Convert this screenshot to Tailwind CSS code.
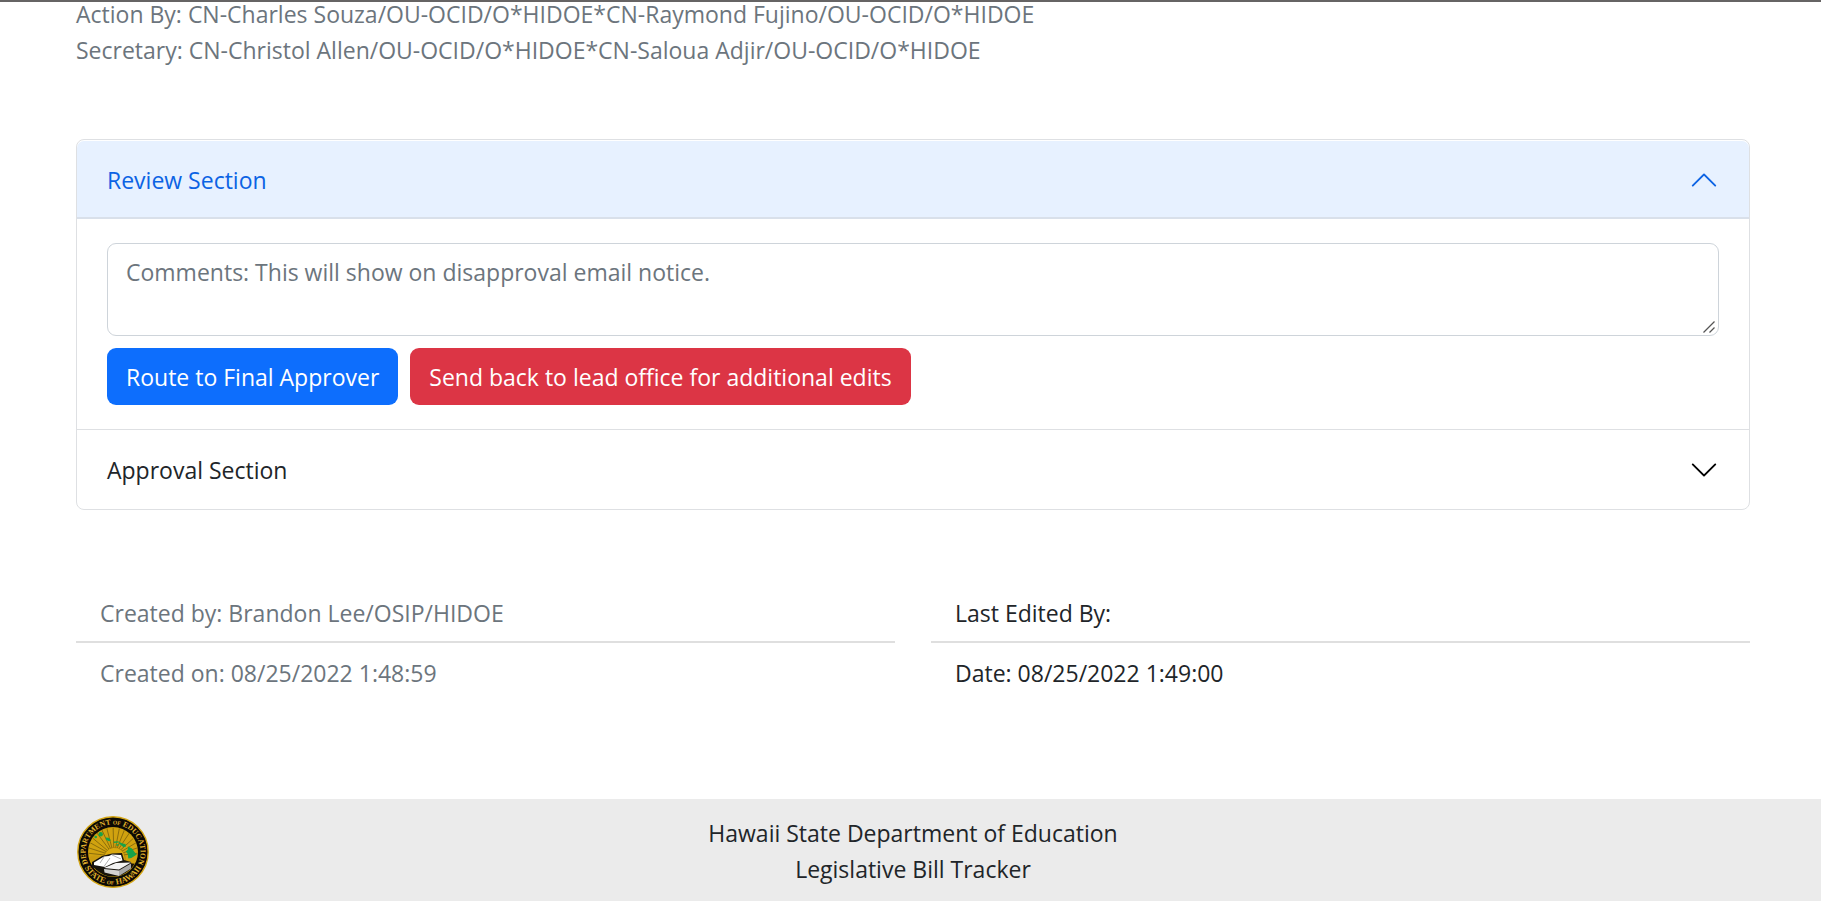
<!DOCTYPE html>
<html lang="en">
<head>
<meta charset="utf-8">
<meta name="viewport" content="width=device-width, initial-scale=1">
<title>Legislative Bill Tracker</title>
<script src="https://cdn.jsdelivr.net/npm/@tailwindcss/browser@4"></script>
</head>
<body class="flex min-h-screen flex-col border-t-2 border-[#666464] bg-white font-['Open_Sans','Noto_Sans',sans-serif] text-[23px] leading-9 text-[#212529]">
<main class="flex grow flex-col gap-[71px] pr-[71px] pl-[76px]">
  <div class="-mt-1.5 text-[#6c757d]">
    <p>Action By: CN-Charles Souza/OU-OCID/O*HIDOE*CN-Raymond Fujino/OU-OCID/O*HIDOE</p>
    <p>Secretary: CN-Christol Allen/OU-OCID/O*HIDOE*CN-Saloua Adjir/OU-OCID/O*HIDOE</p>
  </div>

  <div class="rounded-lg border border-[#dee0e3]">
    <section>
      <h2>
        <button type="button" aria-expanded="true" aria-controls="review" class="mt-px flex w-full items-center justify-between rounded-t-[7px] border-b-2 border-[#d9e0ea] bg-[#e7f1ff] px-[30px] pt-[21px] pb-[19px] text-left text-[#0c63e4]">
          Review Section
          <svg class="size-[30px]" viewBox="0 0 16 16" fill="currentColor" aria-hidden="true"><path fill-rule="evenodd" d="M1.646 11.354a.5.5 0 0 0 .708 0L8 5.707l5.646 5.647a.5.5 0 0 0 .708-.708l-6-6a.5.5 0 0 0-.708 0l-6 6a.5.5 0 0 0 0 .708z"/></svg>
        </button>
      </h2>
      <div id="review" class="px-[30px] py-6">
        <div class="relative mb-3">
          <textarea rows="2" aria-label="Comments" placeholder="Comments: This will show on disapproval email notice." class="block h-[93px] w-full resize-none rounded-[9px] border border-[#ced4da] px-[18px] py-[10px] placeholder:text-[#6c757d]"></textarea>
          <svg class="pointer-events-none absolute right-1 bottom-[3px] size-3" viewBox="0 0 12 12" stroke="#555" stroke-width="1.300" aria-hidden="true"><path d="M.5 11.500L11.500.5M6.500 11.500L11.500 6.500"/></svg>
        </div>
        <div class="flex flex-wrap gap-3">
          <button type="button" class="min-h-[57px] rounded-[9px] bg-[#0d6efd] px-[19px] text-white">Route to Final Approver</button>
          <button type="button" class="min-h-[57px] rounded-[9px] bg-[#dc3545] px-[19px] text-white">Send back to lead office for additional edits</button>
        </div>
      </div>
    </section>
    <section class="border-t border-[#dee0e3]">
      <h2>
        <button type="button" aria-expanded="false" class="flex w-full items-center justify-between px-[30px] pt-[22px] pb-[21px] text-left">
          Approval Section
          <svg class="size-[30px] text-black" viewBox="0 0 16 16" fill="currentColor" aria-hidden="true"><path fill-rule="evenodd" d="M1.646 4.646a.5.5 0 0 1 .708 0L8 10.293l5.646-5.647a.5.5 0 0 1 .708.708l-6 6a.5.5 0 0 1-.708 0l-6-6a.5.5 0 0 1 0-.708z"/></svg>
        </button>
      </h2>
    </section>
  </div>

  <div class="grid grid-cols-2 gap-9">
    <ul class="text-[#6c757d]">
      <li class="border-b-2 border-[#dfdfdf] px-6 pt-[14px] pb-[10px]">Created by: Brandon Lee/OSIP/HIDOE</li>
      <li class="px-6 py-3">Created on: 08/25/2022 1:48:59</li>
    </ul>
    <ul>
      <li class="border-b-2 border-[#dfdfdf] px-6 pt-[14px] pb-[10px]">Last Edited By:</li>
      <li class="px-6 py-3">Date: 08/25/2022 1:49:00</li>
    </ul>
  </div>
</main>

<footer class="grid grid-cols-[1fr_auto_1fr] items-start bg-[#ebebeb] pt-4 pr-[71px] pb-3 pl-[76px]">
  <svg class="size-[74px]" viewBox="0 0 74 74" role="img" aria-label="Department of Education, State of Hawaii seal">
    <defs>
      <clipPath id="disc"><circle cx="37" cy="37" r="24.500"/></clipPath>
      <path id="arcTop" d="M17.600 56.400A27.500 27.500 0 1 1 56.400 56.400"/>
      <path id="arcBottom" d="M4.500 37A32.500 32.500 0 0 0 69.500 37"/>
    </defs>
    <circle cx="37" cy="37" r="35.200" fill="#0c0a04" stroke="#d4a514" stroke-width="1.400"/>
    <circle cx="37" cy="37" r="25" fill="#d0a20f"/>
    <g clip-path="url(#disc)">
      <path stroke="#6f570c" stroke-width="0.700" d="M38 41L10 38M38 41L10 32M38 41L11 26M38 41L13 20M38 41L18 14M38 41L24 11M38 41L30 10M38 41L37 9M38 41L44 10M38 41L50 11M38 41L56 14M38 41L61 20M38 41L63 26M38 41L64 32M38 41L64 38"/>
      <path d="M28 44a10.500 10.500 0 0 1 21-2v5H28z" fill="#d9a911" stroke="#8a6a08" stroke-width="0.500"/>
      <path d="M12 50L30 46L62 49V62H12z" fill="#17130a"/>
      <path d="M12 43C19 38 25 42 29 44L24 49L12 48z" fill="#c99b10"/>
    </g>
    <g fill="#18a349">
      <circle cx="19.700" cy="22" r="1.300"/>
      <circle cx="24.700" cy="19.300" r="2.200"/>
      <path d="M29.500 22.500l3 .2 2.500 2.500-2 1-3-1.500zM37.500 26.500l5-.3.5 1.200-5 .6zM40.500 29l2 .5-.5 1.500-1.800-.8zM43.500 27l3 1.500 3 .5.500 2.500-2.500.8-2.500-2.300-2-1z"/>
      <path d="M52 31.500l4 2 2.500 3.500 2.300 2.500-3 2-2.500 1.500-3 .5-.5-4.500-2-2.500 2-2z"/>
    </g>
    <path d="M16 47l10-6 6-1.500 4-1 10-.5 2 7 7 2 1 5-14 9-13-3.500-1-3-12-2z" fill="#18150f"/>
    <path d="M18 47.500L28 41.500L33 41L36 39.500L45 40L46.500 45.500L37 48L29 52L18 50z" fill="#fff"/>
    <path d="M28 53L40 48L55 47.500L43 54.500z" fill="#f3f3f3"/>
    <path d="M28 54L43 55.500V61L28.500 57.500z" fill="#d2d2d2"/>
    <path d="M43 55.500L55 48.500V53.500L43 61z" fill="#a9a9a9"/>
    <path d="M34 43L28 51.500M28 42L24 48M36 40L45 44" fill="none" stroke="#777" stroke-width="0.600"/>
    <g fill="#e0b12c" font-family="Liberation Serif, serif" font-weight="700">
      <text font-size="7.600" text-anchor="middle"><textPath href="#arcTop" startOffset="50%">DEPARTMENT <tspan font-size="5.500">OF</tspan> EDUCATION</textPath></text>
      <text font-size="8.300" text-anchor="middle"><textPath href="#arcBottom" startOffset="50%">STATE <tspan font-size="5.500">OF</tspan> HAWAII</textPath></text>
      <circle cx="9" cy="48" r="1"/><circle cx="65" cy="48" r="1"/>
    </g>
  </svg>
  <div class="text-center">
    <p>Hawaii State Department of Education</p>
    <p>Legislative Bill Tracker</p>
  </div>
</footer>
</body>
</html>
